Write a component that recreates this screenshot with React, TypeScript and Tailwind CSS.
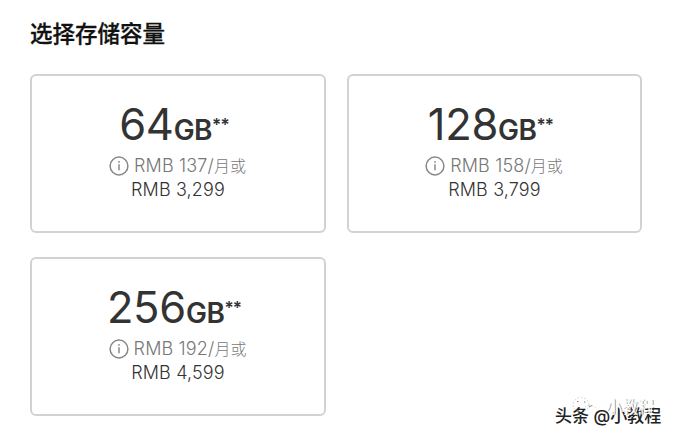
type Capacity = {
  size: string;
  monthly: string;
  price: string;
};

const capacities: Capacity[] = [
  { size: '64', monthly: 'RMB 137', price: 'RMB 3,299' },
  { size: '128', monthly: 'RMB 158', price: 'RMB 3,799' },
  { size: '256', monthly: 'RMB 192', price: 'RMB 4,599' },
];

function InfoIcon() {
  return (
    <svg className="h-5 w-5 shrink-0" viewBox="0 0 20 20" fill="none" stroke="#888" strokeWidth="1.5">
      <circle cx="10" cy="10" r="8.9" />
      <path d="M10 8.2v6" />
      <circle cx="10" cy="5.9" r="0.9" fill="#888" stroke="none" />
    </svg>
  );
}

function CapacityCard({ size, monthly, price }: Capacity) {
  return (
    <button className="flex h-[159px] flex-col items-center rounded-md border-2 border-[#d2d2d2] bg-white pt-[23px] text-[#333]">
      <span className="mr-[8px] flex h-[50px] items-baseline leading-[50px]">
        <span className="text-[43.5px] tracking-[-0.3px]">{size}</span>
        <span className="text-[28px] font-semibold tracking-[-0.5px]">GB</span>
        <span className="relative -top-[9px] text-[17px] font-semibold tracking-[-0.8px]">**</span>
      </span>
      <span className="mt-[5px] mr-[1px] flex h-6 items-center text-[18px] leading-6 font-light text-[#777]">
        <InfoIcon />
        <span className="ml-[5px] tracking-[0.15px]">{monthly}/</span>
        <span className="text-[16px]">月或</span>
      </span>
      <span className="text-[18px] leading-6 font-light tracking-[0.15px]">{price}</span>
    </button>
  );
}

function Watermark() {
  return (
    <div className="absolute top-[396px] left-[555px] h-8 w-[110px]">
      <span className="absolute top-[10px] left-0 text-[17px] leading-5 font-medium whitespace-nowrap text-[#222] [text-shadow:-1px_-1px_0_#fff]">
        头条 @小教程
      </span>
      <svg className="absolute top-0 left-[17px] h-6 w-[25px]" viewBox="0 0 25 24" fill="none" stroke="#ccc" strokeDasharray="1.5 2">
        <ellipse cx="9" cy="8.5" rx="8" ry="7" />
        <path d="M13 11a7 5 0 0 1 11 1" />
        <path d="M5 5.5h1.5M12 6h1.5M17 11l3-1.5" stroke="#888" strokeDasharray="none" />
      </svg>
      <span className="absolute top-px left-[51px] text-[16px] leading-5 whitespace-nowrap text-white [text-shadow:1px_0_0_#999]">
        小教程
      </span>
    </div>
  );
}

export default function App() {
  return (
    <main className="relative h-[438px] w-[674px] overflow-hidden bg-white pt-[18px] pl-[30px] font-['Inter','Noto_Sans_CJK_SC',sans-serif]">
      <h1 className="h-8 text-[22.5px] leading-8 font-medium text-[#111] [-webkit-text-stroke:0.3px_#111]">选择存储容量</h1>
      <div className="mt-6 grid grid-cols-[296px_295px] gap-x-[21px] gap-y-6">
        {capacities.map((capacity) => (
          <CapacityCard key={capacity.size} {...capacity} />
        ))}
      </div>
      <Watermark />
    </main>
  );
}
